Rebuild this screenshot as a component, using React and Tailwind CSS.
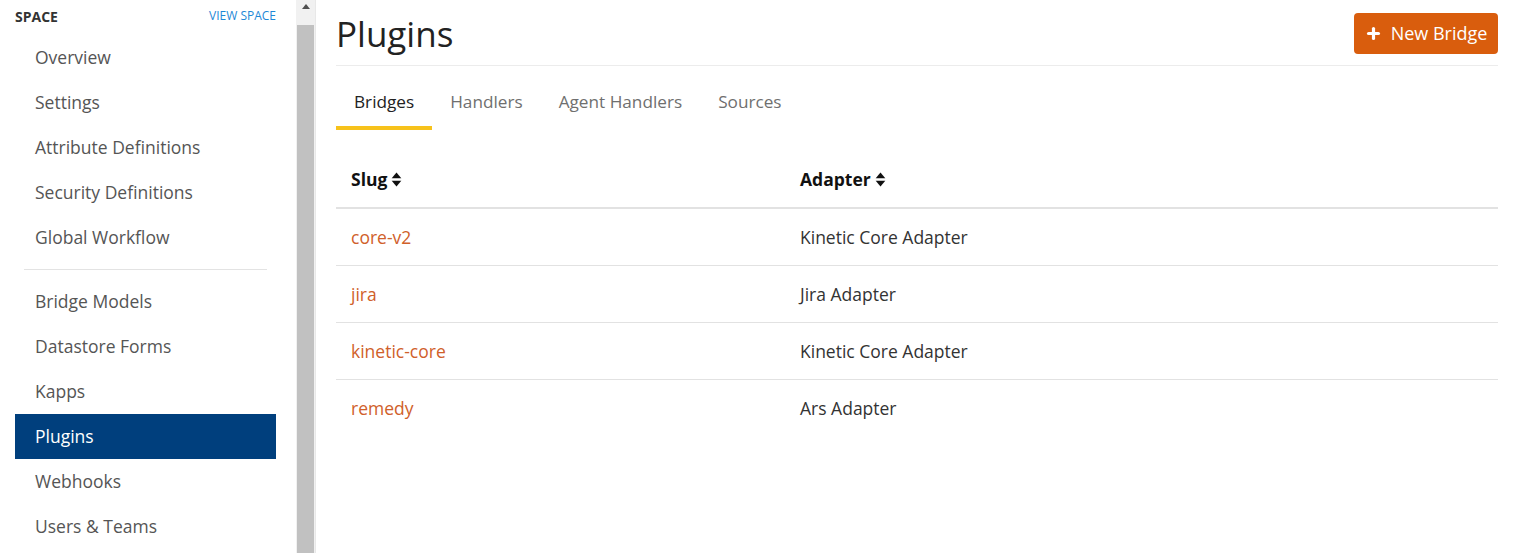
import { Plus } from 'lucide-react';

const NAV_TOP = ['Overview', 'Settings', 'Attribute Definitions', 'Security Definitions', 'Global Workflow'];
const NAV_BOTTOM = ['Bridge Models', 'Datastore Forms', 'Kapps', 'Plugins', 'Webhooks', 'Users & Teams'];
const TABS = ['Bridges', 'Handlers', 'Agent Handlers', 'Sources'];
const BRIDGES = [
  { slug: 'core-v2', adapter: 'Kinetic Core Adapter' },
  { slug: 'jira', adapter: 'Jira Adapter' },
  { slug: 'kinetic-core', adapter: 'Kinetic Core Adapter' },
  { slug: 'remedy', adapter: 'Ars Adapter' },
];

function SortIcon() {
  return (
    <svg width="11" height="15" viewBox="0 0 10 14" className="ml-[4px] inline-block">
      <path d="M5 0.5 L9.5 5.8 H0.5 Z" fill="#111" />
      <path d="M5 13.5 L9.5 8.2 H0.5 Z" fill="#111" />
    </svg>
  );
}

function NavItem({ label, active }) {
  return (
    <div
      className={`h-[45px] flex items-center pl-[20px] text-[17.5px] ${
        active ? 'bg-[#003f7d] text-white' : 'text-[#555]'
      }`}
    >
      {label}
    </div>
  );
}

export default function App() {
  return (
    <div className="flex h-[553px] w-[1513px] overflow-hidden bg-white" style={{ fontFamily: '"Open Sans", sans-serif' }}>
      <aside className="w-[296px] shrink-0 pl-[15px] pr-[20px] pt-[5px]">
        <div className="h-[22px] flex items-center justify-between">
          <span className="text-[14px] font-bold text-[#333]">SPACE</span>
          <span className="text-[12px] text-[#1e88d6]">VIEW SPACE</span>
        </div>
        <div className="mt-[8px]">
          {NAV_TOP.map(l => <NavItem key={l} label={l} />)}
          <div className="mx-[9px] my-[9px] h-px bg-[#e3e3e3]" />
          {NAV_BOTTOM.map(l => <NavItem key={l} label={l} active={l === 'Plugins'} />)}
        </div>
      </aside>

      <div className="w-[20px] shrink-0 bg-[#f1f1f1] flex flex-col items-center border-r border-[#e8e8e8]">
        <div className="h-[25px] w-full flex items-start justify-center pt-[4px]">
          <svg width="8" height="5" viewBox="0 0 8 5"><path d="M4 0 L8 5 H0 Z" fill="#505050" /></svg>
        </div>
        <div className="flex-1 w-[17px] bg-[#c1c1c1]" />
      </div>

      <main className="flex-1 pl-[20px] pr-[15px]">
        <div className="flex items-center justify-between pt-[13px] pb-[11px] border-b border-[#ececec]">
          <h1 className="text-[35px] leading-[41px] text-[#222]">Plugins</h1>
          <button className="h-[41px] w-[144px] rounded-[4px] bg-[#d95d0d] text-white text-[18px] flex items-center justify-center gap-[9px]">
            <Plus size={17} strokeWidth={4.5} />
            New Bridge
          </button>
        </div>

        <div className="flex mt-[10px]">
          {TABS.map(t => (
            <div
              key={t}
              className={`px-[18px] pt-[12px] pb-[11px] text-[17.2px] leading-[27px] border-b-[4px] ${
                t === 'Bridges' ? 'text-[#222] border-[#f7c21b]' : 'text-[#6f6f6f] border-transparent'
              }`}
            >
              {t}
            </div>
          ))}
        </div>

        <div className="mt-[21px] text-[17.5px] leading-[26px]">
          <div className="flex border-b-2 border-[#e2e2e2] py-[15px] font-bold text-[#111]">
            <div className="w-[449px] pl-[15px] flex items-center">Slug<SortIcon /></div>
            <div className="pl-[15px] flex items-center">Adapter<SortIcon /></div>
          </div>
          {BRIDGES.map((b, i) => (
            <div
              key={b.slug}
              className={`flex py-[15px] ${i < BRIDGES.length - 1 ? 'border-b border-[#e2e2e2]' : ''}`}
            >
              <div className="w-[449px] pl-[15px] text-[#d0602a]">{b.slug}</div>
              <div className="pl-[15px] text-[#333]">{b.adapter}</div>
            </div>
          ))}
        </div>
      </main>
    </div>
  );
}
